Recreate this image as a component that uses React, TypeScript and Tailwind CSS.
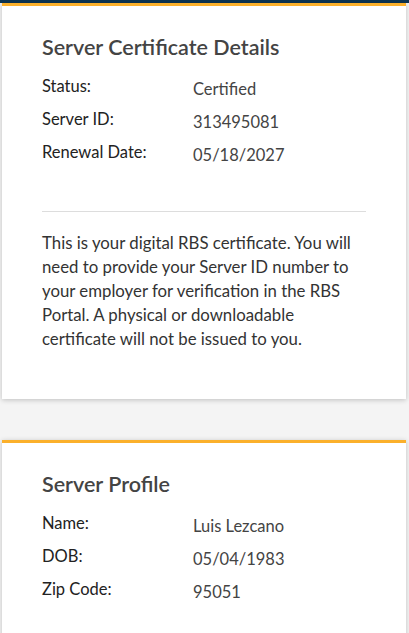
import React from 'react';

const rows1 = [
  { label: 'Status:', value: 'Certified' },
  { label: 'Server ID:', value: '313495081' },
  { label: 'Renewal Date:', value: '05/18/2027' },
];

const rows2 = [
  { label: 'Name:', value: 'Luis Lezcano' },
  { label: 'DOB:', value: '05/04/1983' },
  { label: 'Zip Code:', value: '95051' },
];

const InfoRows = ({ rows }: { rows: { label: string; value: string }[] }) => (
  <div className="mt-[12px] flex flex-col">
    {rows.map((r) => (
      <div key={r.label} className="flex h-[33px] items-start">
        <div className="w-[151px] text-[16.5px] leading-[24px] text-[#222]">{r.label}</div>
        <div className="mt-[3px] text-[16.5px] leading-[24px] text-[#444]">{r.value}</div>
      </div>
    ))}
  </div>
);

const App = () => {
  return (
    <div
      className="min-h-[633px] bg-[#f4f4f4]"
      style={{ fontFamily: 'Lato, "Open Sans", sans-serif' }}
    >
      <div className="h-[3px] bg-[#0d3552]" />
      <div className="px-[2px] pr-[3px]">
        <div className="border-t-[3px] border-[#fbb02b] bg-white px-[40px] pt-[26px] pb-[48px] shadow-[0_1px_5px_rgba(0,0,0,0.22)]">
          <h2 className="text-[21.5px] font-semibold leading-[30px] text-[#444]">Server Certificate Details</h2>
          <InfoRows rows={rows1} />
          <div className="mt-[38px] border-t border-[#dddddd]" />
          <p className="mt-[19px] text-[16.8px] leading-[24px] text-[#333]">
            This is your digital RBS certificate. You will need to provide your Server ID number to your
            employer for verification in the RBS Portal. A physical or downloadable certificate will not be
            issued to you.
          </p>
        </div>

        <div className="mt-[41px] border-t-[3px] border-[#fbb02b] bg-white px-[40px] pt-[26px] pb-[40px] shadow-[0_1px_5px_rgba(0,0,0,0.22)]">
          <h2 className="text-[21.5px] font-semibold leading-[30px] text-[#444]">Server Profile</h2>
          <InfoRows rows={rows2} />
        </div>
      </div>
    </div>
  );
};

export default App;
